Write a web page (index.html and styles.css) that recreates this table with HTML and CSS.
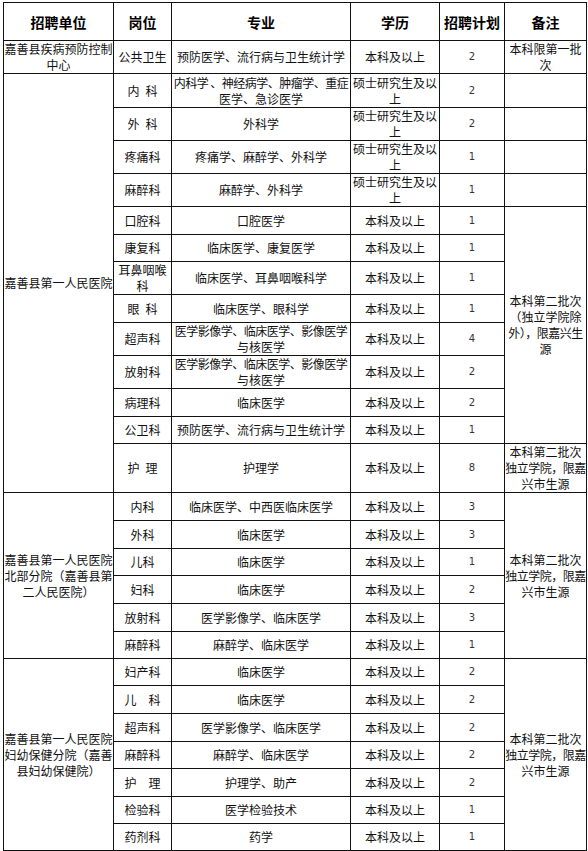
FILE: index.html
```html
<!DOCTYPE html>
<html lang="zh-CN">
<head>
<meta charset="utf-8">
<title>招聘计划</title>
<link rel="stylesheet" href="styles.css">
</head>
<body>
<div class="sheet">
  <div class="c hd">招聘单位</div>
  <div class="c hd">岗位</div>
  <div class="c hd">专业</div>
  <div class="c hd">学历</div>
  <div class="c hd">招聘计划</div>
  <div class="c hd">备注</div>

  <div class="c unit"><p class="t">嘉善县疾病预防控制<br>中心</p></div>
  <div class="c">公共卫生</div>
  <div class="c">预防医学、流行病与卫生统计学</div>
  <div class="c">本科及以上</div>
  <div class="c num">2</div>
  <div class="c note"><p class="t">本科限第一批<br>次</p></div>

  <div class="c unit r13">嘉善县第一人民医院</div>
  <div class="c">内&ensp;科</div>
  <div class="c"><p class="t"><span class="tight">内科学 、神经病学、肿瘤学、重症</span><br>医学、急诊医学</p></div>
  <div class="c"><p class="t">硕士研究生及以<br>上</p></div>
  <div class="c num">2</div>
  <div class="c note"></div>

  <div class="c">外&ensp;科</div>
  <div class="c">外科学</div>
  <div class="c"><p class="t">硕士研究生及以<br>上</p></div>
  <div class="c num">2</div>
  <div class="c note"></div>

  <div class="c">疼痛科</div>
  <div class="c">疼痛学、麻醉学、外科学</div>
  <div class="c"><p class="t">硕士研究生及以<br>上</p></div>
  <div class="c num">1</div>
  <div class="c note"></div>

  <div class="c">麻醉科</div>
  <div class="c">麻醉学、外科学</div>
  <div class="c"><p class="t">硕士研究生及以<br>上</p></div>
  <div class="c num">1</div>
  <div class="c note"></div>

  <div class="c">口腔科</div>
  <div class="c">口腔医学</div>
  <div class="c">本科及以上</div>
  <div class="c num">1</div>
  <div class="c note r8"><p class="t">本科第二批次<br>（独立学院除<br><span class="tight">外），限嘉兴生</span><br>源</p></div>

  <div class="c">康复科</div>
  <div class="c">临床医学、康复医学</div>
  <div class="c">本科及以上</div>
  <div class="c num">1</div>

  <div class="c"><p class="t">耳鼻咽喉<br>科</p></div>
  <div class="c">临床医学、耳鼻咽喉科学</div>
  <div class="c">本科及以上</div>
  <div class="c num">1</div>

  <div class="c">眼&ensp;科</div>
  <div class="c">临床医学、眼科学</div>
  <div class="c">本科及以上</div>
  <div class="c num">1</div>

  <div class="c">超声科</div>
  <div class="c"><p class="t"><span class="tight">医学影像学、临床医学、影像医学</span><br>与核医学</p></div>
  <div class="c">本科及以上</div>
  <div class="c num">4</div>

  <div class="c">放射科</div>
  <div class="c"><p class="t"><span class="tight">医学影像学、临床医学、影像医学</span><br>与核医学</p></div>
  <div class="c">本科及以上</div>
  <div class="c num">2</div>

  <div class="c">病理科</div>
  <div class="c">临床医学</div>
  <div class="c">本科及以上</div>
  <div class="c num">2</div>

  <div class="c">公卫科</div>
  <div class="c">预防医学、流行病与卫生统计学</div>
  <div class="c">本科及以上</div>
  <div class="c num">1</div>

  <div class="c">护&ensp;理</div>
  <div class="c">护理学</div>
  <div class="c">本科及以上</div>
  <div class="c num">8</div>
  <div class="c note"><p class="t">本科第二批次<br><span class="tight">独立学院，限嘉</span><br>兴市生源</p></div>

  <div class="c unit r6"><p class="t">嘉善县第一人民医院<br>北部分院（嘉善县第<br>二人民医院）</p></div>
  <div class="c">内科</div>
  <div class="c">临床医学、中西医临床医学</div>
  <div class="c">本科及以上</div>
  <div class="c num">3</div>
  <div class="c note r6"><p class="t">本科第二批次<br><span class="tight">独立学院，限嘉</span><br>兴市生源</p></div>

  <div class="c">外科</div>
  <div class="c">临床医学</div>
  <div class="c">本科及以上</div>
  <div class="c num">3</div>

  <div class="c">儿科</div>
  <div class="c">临床医学</div>
  <div class="c">本科及以上</div>
  <div class="c num">1</div>

  <div class="c">妇科</div>
  <div class="c">临床医学</div>
  <div class="c">本科及以上</div>
  <div class="c num">2</div>

  <div class="c">放射科</div>
  <div class="c">医学影像学、临床医学</div>
  <div class="c">本科及以上</div>
  <div class="c num">3</div>

  <div class="c">麻醉科</div>
  <div class="c">麻醉学、临床医学</div>
  <div class="c">本科及以上</div>
  <div class="c num">1</div>

  <div class="c unit r7"><p class="t">嘉善县第一人民医院<br>妇幼保健分院（嘉善<br>县妇幼保健院）</p></div>
  <div class="c">妇产科</div>
  <div class="c">临床医学</div>
  <div class="c">本科及以上</div>
  <div class="c num">2</div>
  <div class="c note r7"><p class="t">本科第二批次<br><span class="tight">独立学院，限嘉</span><br>兴市生源</p></div>

  <div class="c">儿　科</div>
  <div class="c">临床医学</div>
  <div class="c">本科及以上</div>
  <div class="c num">2</div>

  <div class="c">超声科</div>
  <div class="c">医学影像学、临床医学</div>
  <div class="c">本科及以上</div>
  <div class="c num">2</div>

  <div class="c">麻醉科</div>
  <div class="c">麻醉学、临床医学</div>
  <div class="c">本科及以上</div>
  <div class="c num">2</div>

  <div class="c">护　理</div>
  <div class="c">护理学、助产</div>
  <div class="c">本科及以上</div>
  <div class="c num">2</div>

  <div class="c">检验科</div>
  <div class="c">医学检验技术</div>
  <div class="c">本科及以上</div>
  <div class="c num">1</div>

  <div class="c">药剂科</div>
  <div class="c">药学</div>
  <div class="c">本科及以上</div>
  <div class="c num">1</div>
</div>
</body>
</html>
```

FILE: styles.css
```css
html, body {
  margin: 0;
  padding: 0;
  background: #ffffff;
}

body {
  font-family: "Noto Sans CJK SC", "Noto Sans", sans-serif;
  font-size: 12px;
  line-height: 16px;
  color: #111111;
}

.sheet {
  display: grid;
  width: max-content;
  margin: 2px 0 0 3px;
  border-top: 1px solid #111;
  border-left: 1px solid #111;
  grid-template-columns: 110px 58px 179px 89px 65px 82px;
  grid-template-rows:
    38px 33px 34px 33px 33px 33px 28px 27px 33px 28px
    33px 33px 28px 27px 49px 28px 28px 27px 28px 28px
    27px 27px 28px 28px 27px 28px 27px 27px;
}

.c {
  box-sizing: border-box;
  border-right: 1px solid #111;
  border-bottom: 1px solid #111;
  display: flex;
  align-items: center;
  justify-content: center;
  text-align: center;
  white-space: nowrap;
  overflow: visible;
  padding: 0;
}

.t {
  margin: 0;
  text-align: center;
}

.hd {
  font-size: 14px;
  font-weight: 700;
  color: #000;
}

.num {
  font-family: "DejaVu Sans", "Liberation Sans", sans-serif;
  font-size: 10px;
  color: #333;
}

.note {
  line-height: 16px;
}

.unit {
  line-height: 16px;
}

.tight {
  letter-spacing: -0.5px;
}

.r6 { grid-row: span 6; }
.r7 { grid-row: span 7; }
.r8 { grid-row: span 8; }
.r13 { grid-row: span 13; }
```
